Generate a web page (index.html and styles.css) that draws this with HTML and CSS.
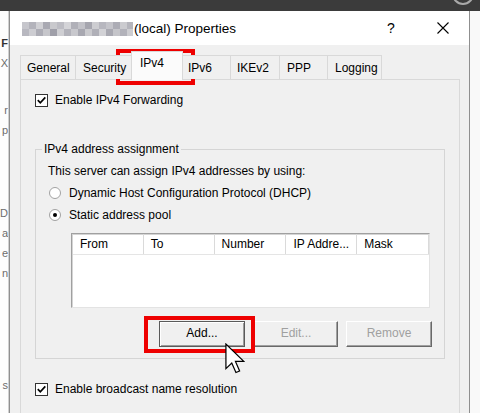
FILE: index.html
```html
<!DOCTYPE html>
<html>
<head>
<meta charset="utf-8">
<link rel="stylesheet" href="styles.css">
</head>
<body>
<div class="screen">
  <div class="topbar"><span class="ring"></span></div>
  <div class="desk">
    <div class="left-strip">
      <div class="bg-line bl-of"><b>F</b></div>
      <div class="bg-line bl-tx">X</div>
      <div class="bg-line bl-r">r</div>
      <div class="bg-line bl-p">p</div>
      <div class="bg-line bl-d">D</div>
      <div class="bg-line bl-na">a</div>
      <div class="bg-line bl-es">e</div>
      <div class="bg-line bl-in">n</div>
      <div class="bg-line bl-s">s</div>
    </div>
    <div class="dialog">
      <div class="titlebar">
        <span class="blur"></span><span class="title">(local) Properties</span>
        <span class="tb-btn help">?</span>
        <span class="tb-btn close"><svg width="12" height="12" viewBox="0 0 12 12"><path d="M0.5 0.5 L11.5 11.5 M11.5 0.5 L0.5 11.5" stroke="#000" stroke-width="1.1" fill="none"/></svg></span>
      </div>
      <div class="body">
        <div class="tabs">
          <div class="tab t-general">General</div>
          <div class="tab t-security">Security</div>
          <div class="tab active">IPv4</div>
          <div class="tab t-ipv6">IPv6</div>
          <div class="tab t-ikev2">IKEv2</div>
          <div class="tab t-ppp">PPP</div>
          <div class="tab t-logging">Logging</div>
        </div>
        <div class="panel">
          <div class="check-row first">
            <span class="checkbox"><svg width="11" height="11" viewBox="0 0 11 11"><path d="M1.8 5.2 L4.3 7.8 L9.3 2.4" stroke="#000" stroke-width="1.7" fill="none"/></svg></span>
            <span>Enable IPv4 Forwarding</span>
          </div>
          <fieldset class="group">
            <legend>IPv4 address assignment</legend>
            <div class="row">This server can assign IPv4 addresses by using:</div>
            <div class="row radio-row"><span class="radio"></span>Dynamic Host Configuration Protocol (DHCP)</div>
            <div class="row radio-row"><span class="radio checked"></span>Static address pool</div>
            <div class="list">
              <div class="list-head">
                <div class="col c1">From</div>
                <div class="col c2">To</div>
                <div class="col c3">Number</div>
                <div class="col c4">IP Addre...</div>
                <div class="col c5">Mask</div>
              </div>
            </div>
            <div class="buttons">
              <div class="btn default">Add...</div>
              <div class="btn edit disabled">Edit...</div>
              <div class="btn disabled">Remove</div>
            </div>
          </fieldset>
          <div class="check-row second">
            <span class="checkbox"><svg width="11" height="11" viewBox="0 0 11 11"><path d="M1.8 5.2 L4.3 7.8 L9.3 2.4" stroke="#000" stroke-width="1.7" fill="none"/></svg></span>
            <span>Enable broadcast name resolution</span>
          </div>
        </div>
      </div>
    </div>
    <div class="right-strip"></div>
  </div>
  <div class="mark mark-tab"></div>
  <div class="mark mark-add"></div>
  <svg class="cursor" width="20" height="31" viewBox="0 0 13 20"><path d="M0.6 0.6 L0.6 16.6 L4.4 12.9 L7.1 19.1 L9.5 18.1 L6.8 11.9 L12.2 11.9 Z" fill="#fff" stroke="#000" stroke-width="0.8" stroke-linejoin="miter"/></svg>
</div>
</body>
</html>
```
FILE: styles.css
```css
html, body {
  margin: 0;
  padding: 0;
}
.screen {
  position: relative;
  width: 480px;
  height: 413px;
  overflow: hidden;
  background: #fbfbfb;
  font-family: "Liberation Sans", Arial, sans-serif;
  font-size: 12px;
  color: #000;
}
.topbar {
  height: 11px;
  background: #3b3b3b;
  display: flex;
  justify-content: flex-end;
  overflow: hidden;
}
.ring {
  width: 18px;
  height: 18px;
  border: 2px solid #a9a9a9;
  border-radius: 50%;
  margin-top: -17px;
  margin-right: 6px;
}
.desk {
  display: flex;
  height: 402px;
}
.left-strip {
  width: 8px;
  border-right: 1px solid #d0d0d0;
  overflow: hidden;
  background: #fdfdfd;
  color: #6d6d6d;
  font-size: 11px;
}
.bg-line {
  height: 16px;
  line-height: 16px;
  display: flex;
  justify-content: flex-end;
  white-space: nowrap;
}
.bl-of { margin-top: 24px; color: #333; }
.bl-tx { margin-top: 4px; }
.bl-r { margin-top: 31px; }
.bl-p { margin-top: 4px; }
.bl-d { margin-top: 67px; }
.bl-na, .bl-es, .bl-in { margin-top: 4px; }
.bl-s { margin-top: 96px; }
.dialog {
  width: 459px;
  border-left: 1px solid #8f8f8f;
  border-right: 1px solid #8f8f8f;
  background: #f0f0f0;
  display: flex;
  flex-direction: column;
}
.right-strip {
  flex: 1;
  background: #f9f9f9;
}
.titlebar {
  height: 34px;
  background: #fff;
  display: flex;
  align-items: center;
  padding-left: 12px;
  padding-right: 3px;
}
.blur {
  width: 111px;
  height: 14px;
  margin-top: 2px;
  background:
    linear-gradient(to right, #c6c6cc 0 7px, #b3b3bb 7px 14px, #d0d0d4 14px 21px, #a9a9b2 21px 28px, #c9c9cd 28px 35px, #bdbdc4 35px 42px, #d4d4d8 42px 49px, #b0b0b8 49px 56px, #c2c2c8 56px 63px, #a6a6af 63px 70px, #cdcdd1 70px 77px, #b7b7bf 77px 84px, #c4c4ca 84px 91px, #acacb5 91px 98px, #cbcbcf 98px 105px, #b5b5bc 105px 111px) top / 111px 7px no-repeat,
    linear-gradient(to right, #b8b8c0 0 7px, #cdcdd2 7px 14px, #adadb6 14px 21px, #c6c6cb 21px 28px, #9f9fa9 28px 35px, #cfcfd3 35px 42px, #b3b3bb 42px 49px, #c8c8cd 49px 56px, #a8a8b1 56px 63px, #cacace 63px 70px, #b0b0b8 70px 77px, #d2d2d6 77px 84px, #a9a9b2 84px 91px, #c5c5ca 91px 98px, #b2b2ba 98px 105px, #cdcdd1 105px 111px) bottom / 111px 7px no-repeat;
}
.title {
  font-size: 13.5px;
  margin-left: 1px;
  flex: 1;
}
.tb-btn {
  width: 46px;
  height: 30px;
  display: flex;
  align-items: center;
  justify-content: center;
}
.help {
  font-size: 14px;
  margin-right: 6px;
}
.body {
  flex: 1;
  display: flex;
  flex-direction: column;
  padding: 10px 9px 0 10px;
}
.tabs {
  display: flex;
  align-items: flex-end;
  height: 24px;
  position: relative;
  z-index: 1;
}
.tab {
  box-sizing: border-box;
  height: 24px;
  padding: 4px 0 0 7px;
  line-height: 16px;
  white-space: nowrap;
  border-top: 1px solid #d9d9d9;
  border-left: 1px solid #d9d9d9;
  background: #f0f0f0;
}
.t-general { width: 55px; padding-left: 6px; }
.t-security { width: 56px; padding-left: 7px; }
.t-ipv6 { width: 47px; border-left: none; padding-left: 5px; }
.t-ikev2 { width: 49px; padding-left: 6px; }
.t-ppp { width: 48px; }
.t-logging { width: 55px; border-right: 1px solid #d9d9d9; }
.tab.active {
  width: 52px;
  height: 29px;
  padding: 3px 0 0 8px;
  margin: 0 0 -1px 0;
  border-right: 1px solid #d9d9d9;
  background: #fbfbfb;
  position: relative;
  z-index: 2;
}
.panel {
  flex: 1;
  border: 1px solid #d9d9d9;
  border-bottom: none;
  padding: 12px 14px 0 14px;
}
.check-row {
  display: flex;
  align-items: center;
  height: 16px;
  line-height: 16px;
}
.check-row.second {
  margin-top: 22px;
}
.checkbox {
  box-sizing: border-box;
  width: 13px;
  height: 13px;
  border: 1px solid #333;
  background: #fff;
  margin-right: 7px;
  display: flex;
  align-items: center;
  justify-content: center;
}
.group {
  margin: 34px 0 0 0;
  border: 1px solid #d5d5d5;
  padding: 4px 12px 11px 12px;
  min-inline-size: 0;
}
.group legend {
  line-height: 14px;
  padding: 0 2px;
  margin-left: -6px;
}
.row {
  height: 22px;
  line-height: 22px;
  display: flex;
  align-items: center;
}
.radio {
  box-sizing: border-box;
  width: 12px;
  height: 12px;
  border: 1px solid #a2a2a2;
  border-radius: 50%;
  background: #fff;
  margin-left: 1px;
  margin-right: 8px;
  display: flex;
  align-items: center;
  justify-content: center;
}
.radio.checked::after {
  content: "";
  width: 4px;
  height: 4px;
  border-radius: 50%;
  background: #000;
}
.list {
  box-sizing: border-box;
  height: 75px;
  margin: 7px 2px 0 23px;
  background: #fff;
  border: 1px solid;
  border-color: #a0a0a0 #e3e3e3 #e3e3e3 #a0a0a0;
  box-shadow: inset 1px 1px 0 #d4d4d4;
}
.list-head {
  display: flex;
  height: 20px;
  border-bottom: 1px solid #e5e5e5;
  margin-left: 1px;
}
.col {
  box-sizing: border-box;
  border-right: 1px solid #dadada;
  padding-left: 7px;
  line-height: 20px;
  white-space: nowrap;
}
.c1 { width: 71px; }
.c2 { width: 71px; }
.c3 { width: 72px; }
.c4 { width: 71px; }
.c5 { width: 72px; }
.buttons {
  display: flex;
  justify-content: flex-end;
  margin-top: 13px;
}
.btn {
  box-sizing: border-box;
  width: 86px;
  height: 26px;
  line-height: 23px;
  text-align: center;
  background: #f0f0f0;
  border: 1px solid;
  border-color: #fff #696969 #696969 #fff;
  box-shadow: inset -1px -1px 0 #a0a0a0;
  margin-left: 8px;
}
.btn.edit {
  width: 84px;
}
.btn.default {
  margin-left: 0;
  margin-right: 1px;
  border-color: #5a5a5a;
  box-shadow: inset 1px 1px 0 #fff, inset -1px -1px 0 #9a9a9a;
}
.btn.disabled {
  color: #a0a0a0;
}
.mark {
  position: absolute;
  box-sizing: border-box;
  border: 4px solid #ee0000;
}
.mark-tab {
  left: 116px;
  top: 49px;
  width: 79px;
  height: 36px;
}
.mark-add {
  left: 144px;
  top: 316px;
  width: 111px;
  height: 37px;
}
.cursor {
  position: absolute;
  left: 225px;
  top: 343px;
}
```
